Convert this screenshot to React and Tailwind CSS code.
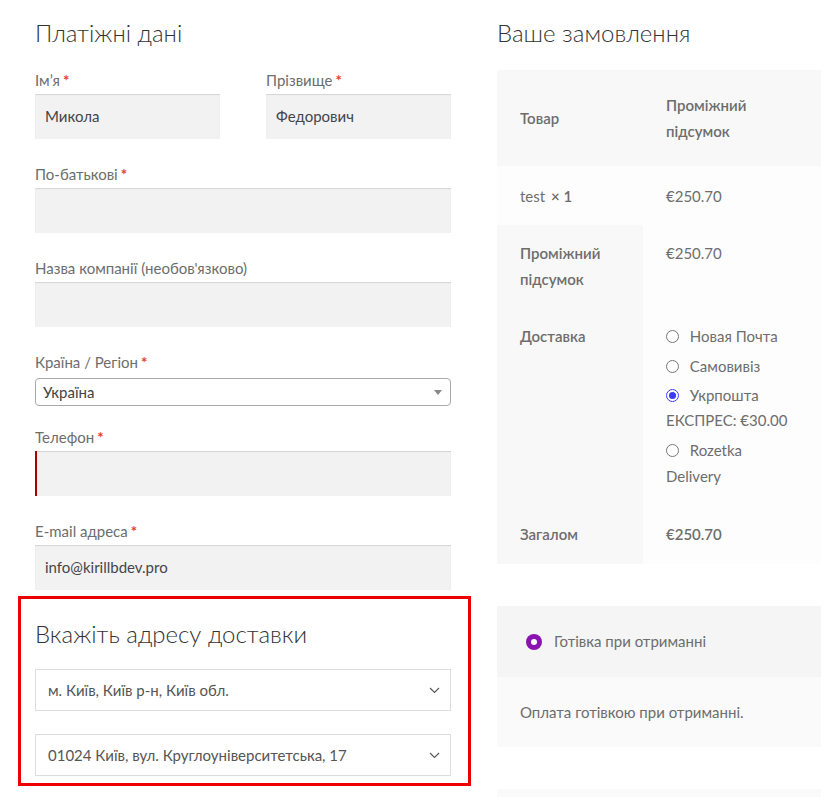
import React from "react";

const font = { fontFamily: "Lato, 'Noto Sans', sans-serif" };

const Req = () => <span className="text-[#e2401c] font-bold ml-[3px]">*</span>;

const Field = ({ label, required, value, error, className = "" }) => (
  <div className={`flex flex-col ${className}`}>
    <label className="h-[24px] leading-[24px] text-[15px] text-[#6d6d6d] mb-[2px]">
      {label}
      {required && <Req />}
    </label>
    <div
      className={`h-[45px] bg-[#f2f2f2] shadow-[inset_0_1px_1px_rgba(0,0,0,0.125)] flex items-center px-[10px] text-[15px] text-[#43454b] ${
        error ? "border-l-2 border-[#a00] pl-[8px]" : ""
      }`}
    >
      {value}
    </div>
  </div>
);

const Chevron = () => (
  <svg width="11" height="7" viewBox="0 0 11 7" className="text-[#555]">
    <path d="M1 1l4.5 4.5L10 1" fill="none" stroke="currentColor" strokeWidth="1.1" />
  </svg>
);

const AddrSelect = ({ value, className = "" }) => (
  <div
    className={`h-[42px] border border-[#ddd] bg-white flex items-center justify-between pl-[12px] pr-[10px] text-[15px] text-[#555] ${className}`}
  >
    <span>{value}</span>
    <Chevron />
  </div>
);

const Radio = ({ checked }) =>
  checked ? (
    <span className="inline-block w-[13px] h-[13px] rounded-full border border-[#3b3bf5] bg-white p-[2px] align-[-1px]">
      <span className="block w-full h-full rounded-full bg-[#3b3bf5]" />
    </span>
  ) : (
    <span className="inline-block w-[13px] h-[13px] rounded-full border border-[#767676] bg-white align-[-1px]" />
  );

export default function App() {
  return (
    <div style={font} className="bg-white w-[839px] h-[797px] overflow-hidden flex pt-[18px]">
      {/* Billing */}
      <div className="ml-[35px] w-[416px] flex flex-col">
        <h3 className="text-[24px] leading-[30px] font-light text-[#333]">Платіжні дані</h3>
        <div className="flex justify-between mt-[20px]">
          <Field label="Ім’я" required value="Микола" className="w-[185px]" />
          <Field label="Прізвище" required value="Федорович" className="w-[185px]" />
        </div>
        <Field label="По-батькові" required className="mt-[23px]" />
        <Field label="Назва компанії (необов'язково)" className="mt-[23px]" />
        <div className="flex flex-col mt-[23px]">
          <label className="h-[24px] leading-[24px] text-[15px] text-[#6d6d6d] mb-[4px]">
            Країна / Регіон
            <Req />
          </label>
          <div className="h-[28px] border border-[#aaa] rounded-[4px] bg-white flex items-center justify-between pl-[7px] pr-[8px] text-[15px] text-[#444]">
            <span>Україна</span>
            <span className="w-0 h-0 border-l-[4px] border-r-[4px] border-t-[5px] border-l-transparent border-r-transparent border-t-[#888]" />
          </div>
        </div>
        <Field label="Телефон" required error className="mt-[19px]" />
        <Field label="E-mail адреса" required value="info@kirillbdev.pro" className="mt-[23px]" />

        <div className="mt-[6px] -ml-[17px] w-[453px] border-[3px] border-[#e00] pl-[14px] pr-[17px] pt-[20px] pb-[7px]">
          <h3 className="text-[24px] leading-[30px] font-light text-[#333]">Вкажіть адресу доставки</h3>
          <AddrSelect value="м. Київ, Київ р-н, Київ обл." className="mt-[20px]" />
          <AddrSelect value="01024 Київ, вул. Круглоуніверситетська, 17" className="mt-[23px]" />
        </div>
      </div>

      {/* Order */}
      <div className="ml-[46px] w-[324px] flex flex-col">
        <h3 className="text-[24px] leading-[30px] font-light text-[#333]">Ваше замовлення</h3>
        <div className="mt-[22px] text-[15px] leading-[26px] text-[#6d6d6d]">
          <div className="flex bg-[#f8f8f8] font-semibold">
            <div className="w-[146px] pl-[23px] flex items-center">Товар</div>
            <div className="flex-1 pl-[23px] py-[22px]">
              Проміжний
              <br />
              підсумок
            </div>
          </div>
          <div className="flex bg-[#fdfdfd] h-[59px] items-center">
            <div className="w-[146px] pl-[23px]">
              test <strong className="ml-[2px] font-semibold">× 1</strong>
            </div>
            <div className="flex-1 pl-[23px]">€250.70</div>
          </div>
          <div className="flex">
            <div className="w-[146px] pl-[23px] pt-[15px] pb-[16px] bg-[#f8f8f8] font-semibold">
              Проміжний
              <br />
              підсумок
            </div>
            <div className="flex-1 pl-[23px] pt-[15px] bg-[#fdfdfd]">€250.70</div>
          </div>
          <div className="flex">
            <div className="w-[146px] pl-[23px] pt-[15px] bg-[#f8f8f8] font-semibold">Доставка</div>
            <div className="flex-1 pl-[23px] pt-[15px] pb-[17px] bg-[#fdfdfd] flex flex-col gap-[4px]">
              <div>
                <Radio /> <span className="ml-[7px]">Новая Почта</span>
              </div>
              <div>
                <Radio /> <span className="ml-[7px]">Самовивіз</span>
              </div>
              <div className="leading-[25px]">
                <Radio checked /> <span className="ml-[7px]">Укрпошта</span>
                <br />
                ЕКСПРЕС: €30.00
              </div>
              <div>
                <Radio /> <span className="ml-[7px]">Rozetka</span>
                <br />
                Delivery
              </div>
            </div>
          </div>
          <div className="flex h-[58px]">
            <div className="w-[146px] pl-[23px] pt-[15px] bg-[#f8f8f8] font-semibold">Загалом</div>
            <div className="flex-1 pl-[23px] pt-[15px] bg-[#fdfdfd] font-semibold">€250.70</div>
          </div>
        </div>

        <div className="mt-[42px] text-[15px] text-[#6d6d6d]">
          <div className="h-[71px] bg-[#f5f5f5] flex items-center pl-[29px]">
            <span className="w-[16px] h-[16px] rounded-full bg-[#8a14b0] flex items-center justify-center">
              <span className="w-[6px] h-[6px] rounded-full bg-white" />
            </span>
            <span className="ml-[12px]">Готівка при отриманні</span>
          </div>
          <div className="h-[70px] bg-[#fafafa] flex items-center pl-[23px]">Оплата готівкою при отриманні.</div>
          <div className="h-[40px] bg-[#fafafa] mt-[42px]" />
        </div>
      </div>
    </div>
  );
}
